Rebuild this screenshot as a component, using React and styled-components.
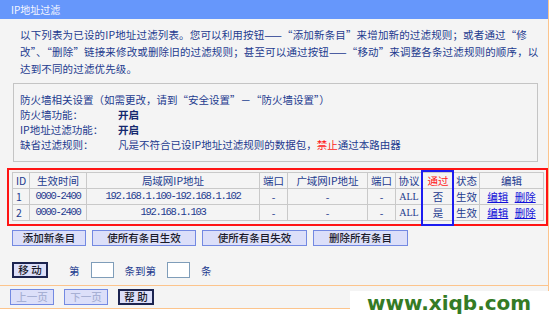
import React from "react";
import styled, { createGlobalStyle } from "styled-components";

const Global = createGlobalStyle`
  html, body { margin:0; padding:0; background:#fff; }
  body {
    width:553px; height:315px; overflow:hidden; position:relative;
    font-family:"Noto Sans CJK SC", "Liberation Sans", sans-serif;
  }
`;

const Panel = styled.div`
  width:548px;
  border-right:1px solid #fcc48c;
  background:#f4f4f4;
  color:#1d3b8f;
  font-size:10.5px;
`;

const TitleBar = styled.div`
  height:19px;
  background:#6697fb;
  color:#f4f6ff;
  font-size:10px;
  line-height:19px;
  padding-left:11px;
`;

const Intro = styled.p`
  margin:0;
  padding:7px 0 0 20px;
  line-height:17px;
  white-space:nowrap;
  letter-spacing:0.15px;
`;

const SettingsBox = styled.div`
  margin:6px 0 0 13px;
  width:511px;
  padding:8px 6px 9px 6px;
  border:1px solid #c4c4c4;
  display:grid;
  grid-template-columns:98px auto;
  line-height:15px;
  white-space:nowrap;
`;

const FullLine = styled.div`
  grid-column:1 / 3;
`;

const Value = styled.span`
  font-weight:${p => (p.$bold ? 700 : 400)};
  color:${p => (p.$bold ? "#14286e" : "inherit")};
`;

const Red = styled.span`
  color:#ff1a1a;
`;

const RedFrame = styled.div`
  position:relative;
  margin:6px 0 0 7px;
  width:534px;
  padding:2px 0 3px 3px;
  border:2px solid #ff1414;
`;

const Mark = styled.div`
  position:absolute;
  left:412px; top:0px;
  width:29px; height:52px;
  border:2px solid #1c1cf0;
`;

const Table = styled.table`
  border-collapse:collapse;
  table-layout:fixed;
  width:531px;
`;

const Cell = styled.td`
  height:15px;
  padding:0;
  border:1px solid #c9c9c9;
  text-align:${p => p.$align || "center"};
  padding-left:${p => (p.$align === "left" ? "3px" : "0")};
  color:${p => (p.$red ? "#ff2020" : "#1d3b8f")};
  font-family:${p => (p.$mono ? '"Liberation Mono", monospace' : "inherit")};
  font-size:10.5px;
  letter-spacing:${p => (p.$mono ? "-1.3px" : "0")};
  font-weight:400;
  line-height:15px;
  white-space:nowrap;
  overflow:hidden;
`;

const Link = styled.a`
  color:#1010d8;
  text-decoration:underline;
  margin:0 2px;
  cursor:pointer;
`;

const ButtonRow = styled.div`
  display:flex;
  align-items:center;
  gap:${p => p.$gap || 6}px;
  margin-top:${p => p.$top}px;
  padding-left:12px;
  height:16px;
`;

const Btn = styled.button`
  width:${p => p.$w}px;
  height:16px;
  padding:0;
  box-sizing:border-box;
  font-family:"Noto Sans CJK SC", sans-serif;
  font-size:10.5px;
  line-height:12px;
  background:#dcdff9;
  border:${p => (p.$dark ? "2px solid #1c2450" : "1px solid #7389e2")};
  color:${p => (p.$off ? "#a7b0d4" : "#1a1a2a")};
  font-weight:500;
`;

const Word = styled.span`
  margin-left:${p => p.$ml || 0}px;
`;

const Box = styled.input`
  width:23px;
  height:16px;
  box-sizing:border-box;
  margin:0 0 0 5px;
  border:1px solid #7f9db9;
  background:#fff;
`;

const Footer = styled.div`
  margin-top:7px;
  border-top:1px solid #fcc48c;
  border-bottom:1px solid #fcc48c;
  padding:3px 0 3px 10px;
  display:flex;
  gap:10px;
`;

const Watermark = styled.div`
  position:absolute;
  left:350px; top:291px;
  width:203px; height:24px;
  background:#fff;
  color:#347b25;
  font-family:"DejaVu Sans", sans-serif;
  font-weight:700;
  font-size:20px;
  line-height:24px;
  padding-left:17px;
  box-sizing:border-box;
  white-space:nowrap;
`;

const heads = [
  ["ID", 17, "left"], ["生效时间", 57], ["局域网IP地址", 173], ["端口", 28],
  ["广域网IP地址", 80], ["端口", 28], ["协议", 27], ["通过", 31],
  ["状态", 26], ["编辑", 64],
];

const rows = [
  { id: 1, lan: "192.168.1.100-192.168.1.102", pass: "否" },
  { id: 2, lan: "192.168.1.103", pass: "是" },
];

const App = () => {
  return (
    <>
      <Global />
      <Panel>
        <TitleBar>IP地址过滤</TitleBar>
        <Intro>
          以下列表为已设的IP地址过滤列表。您可以利用按钮——“添加新条目”来增加新的过滤规则；或者通过“修<br />
          改”、“删除”链接来修改或删除旧的过滤规则；甚至可以通过按钮——“移动”来调整各条过滤规则的顺序，以<br />
          达到不同的过滤优先级。
        </Intro>
        <SettingsBox>
          <FullLine>防火墙相关设置（如需更改，请到“安全设置”－“防火墙设置”）</FullLine>
          <span>防火墙功能：</span><Value $bold>开启</Value>
          <span>IP地址过滤功能：</span><Value $bold>开启</Value>
          <span>缺省过滤规则：</span>
          <Value>凡是不符合已设IP地址过滤规则的数据包，<Red>禁止</Red>通过本路由器</Value>
        </SettingsBox>
        <RedFrame>
          <Table>
            <colgroup>
              {heads.map((h, i) => <col key={i} style={{ width: h[1] }} />)}
            </colgroup>
            <tbody>
              <tr>
                {heads.map((h, i) => (
                  <Cell as="th" key={i} $align={h[2]} $red={h[0] === "通过"}>
                    {h[0]}
                  </Cell>
                ))}
              </tr>
              {rows.map(r => (
                <tr key={r.id}>
                  <Cell $align="left">{r.id}</Cell>
                  <Cell $mono>0000-2400</Cell>
                  <Cell $mono>{r.lan}</Cell>
                  <Cell>-</Cell>
                  <Cell>-</Cell>
                  <Cell>-</Cell>
                  <Cell style={{ fontFamily: '"Liberation Serif", serif', fontSize: 10 }}>ALL</Cell>
                  <Cell>{r.pass}</Cell>
                  <Cell>生效</Cell>
                  <Cell><Link>编辑</Link> <Link>删除</Link></Cell>
                </tr>
              ))}
            </tbody>
          </Table>
          <Mark />
        </RedFrame>
        <ButtonRow $top={4}>
          <Btn $w={74}>添加新条目</Btn>
          <Btn $w={104}>使所有条目生效</Btn>
          <Btn $w={105}>使所有条目失效</Btn>
          <Btn $w={95}>删除所有条目</Btn>
        </ButtonRow>
        <ButtonRow $top={16} $gap={0}>
          <Btn $w={36} $dark>移 动</Btn>
          <Word $ml={15}>第</Word>
          <Box />
          <Word $ml={5}>条到第</Word>
          <Box />
          <Word $ml={5}>条</Word>
        </ButtonRow>
        <Footer>
          <Btn $w={44} $off>上一页</Btn>
          <Btn $w={44} $off>下一页</Btn>
          <Btn $w={36} $dark>帮 助</Btn>
        </Footer>
      </Panel>
      <Watermark>www.xiqb.com</Watermark>
    </>
  );
};

export default App;
